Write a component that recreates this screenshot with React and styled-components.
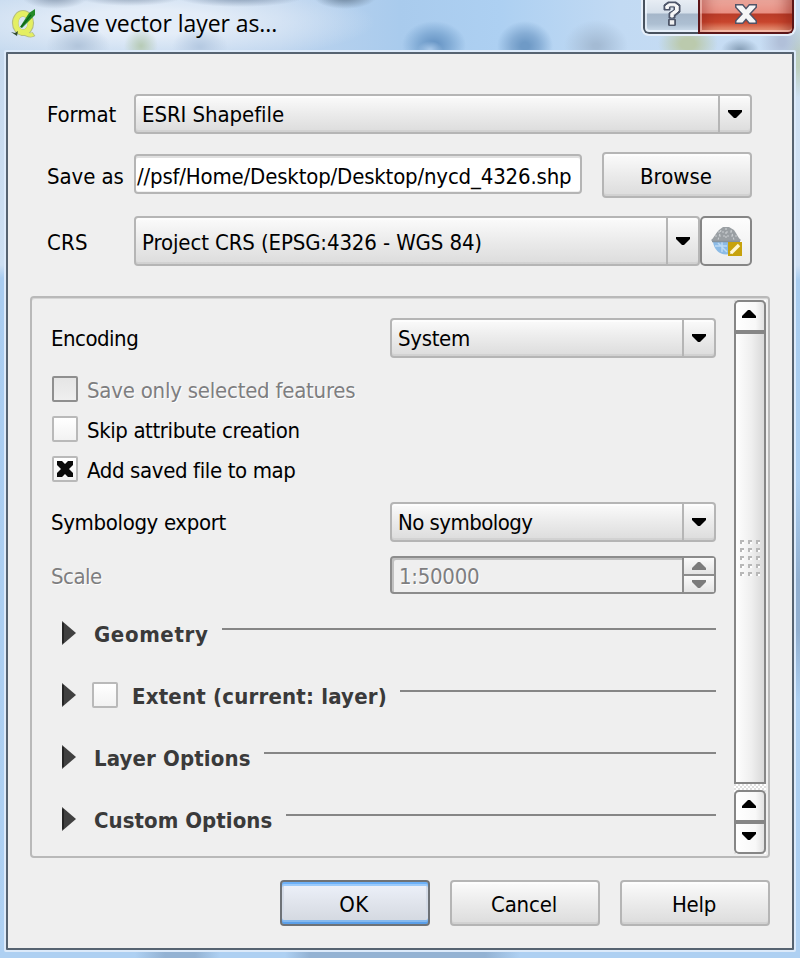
import React from 'react';
import styled, { createGlobalStyle, css } from 'styled-components';

const GlobalStyle = createGlobalStyle`
  * { box-sizing: border-box; }
  body { margin: 0; background: #b4d1f0; overflow: hidden; }
`;

const Window = styled.main`
  width: 800px;
  height: 958px;
  display: flex;
  flex-direction: column;
  padding: 0 4px;
  font-family: "DejaVu Sans Condensed", "DejaVu Sans", sans-serif;
  font-size: 22px;
  color: #000;
  background:
    radial-gradient(ellipse 34px 13px at 55px -4px, #8c9db3 10%, transparent 100%),
    radial-gradient(ellipse 56px 11px at 130px -5px, #8c9db3 10%, transparent 100%),
    radial-gradient(ellipse 66px 11px at 240px -4px, #8498b1 10%, transparent 100%),
    radial-gradient(ellipse 32px 13px at 345px -4px, #70879f 15%, transparent 100%),
    radial-gradient(ellipse 13px 9px at 430px 50px, #a5c6e8 10%, transparent 100%),
    radial-gradient(ellipse 32px 24px at 434px 45px, #6b98c7 15%, #82acd6 50%, transparent 100%),
    radial-gradient(ellipse 28px 25px at 525px 46px, #6f9ac6 15%, #86add5 50%, transparent 100%),
    radial-gradient(ellipse 32px 26px at 596px 46px, #a4bbd4 10%, transparent 100%),
    radial-gradient(ellipse 30px 22px at 688px 44px, #bbcaad 25%, transparent 100%),
    radial-gradient(ellipse 19px 12px at 740px 50px, #8ba3bb 10%, transparent 100%),
    radial-gradient(ellipse 22px 26px at 782px 42px, #b1c0d9 15%, transparent 100%),
    radial-gradient(ellipse 16px 38px at 798px 60px, #bdcfbd 20%, transparent 100%),
    radial-gradient(ellipse 17px 18px at 141px 46px, #b8ccb8 5%, transparent 100%),
    radial-gradient(ellipse 32px 20px at 78px 46px, #b3c6dc 5%, transparent 100%),
    radial-gradient(ellipse 28px 20px at 200px 47px, #b6cae2 5%, transparent 100%),
    radial-gradient(ellipse 230px 42px at 145px 22px, #e4edf8 30%, transparent 100%),
    linear-gradient(90deg, transparent 135px, #93b2d3 165px, #93b2d3 195px, transparent 220px, transparent 285px, #93b2d3 310px, #93b2d3 485px, transparent 520px) 0 950px / 800px 8px no-repeat,
    linear-gradient(180deg, transparent 480px, #91afd0 580px, #91afd0 630px, transparent 700px) 796px 0 / 4px 958px no-repeat,
    linear-gradient(180deg, #c6d9ee 0, #cddff2 213px, #a9ccf0 226px, #aed0f2 100%) 0 52px / 5px 906px no-repeat,
    linear-gradient(180deg, #cfe1f4 0, #cfe0f3 213px, #a9cdf0 228px, #aed0f2 100%) 795px 52px / 5px 906px no-repeat,
    linear-gradient(90deg, #c3d8ee 0, #bdd4ee 280px, #a9cbed 400px, #add0f2 500px, #c2daf3 620px, #c9def4 100%) 0 0 / 800px 54px no-repeat,
    #aed0f2;
`;

const TitleBar = styled.header`
  height: 50px;
  display: flex;
  align-items: flex-start;
  padding-left: 7px;
`;

const AppIcon = styled.svg`
  width: 26px;
  height: 32px;
  margin-top: 8px;
  flex: none;
`;

const Title = styled.h1`
  margin: 7px 0 0 13px;
  font: 400 23px/32px "Open Sans", "Noto Sans", sans-serif;
  letter-spacing: -0.07px;
`;

const CaptionButtons = styled.div`
  display: flex;
  margin-left: auto;
  height: 36px;
  border: solid #e6effa;
  border-width: 0 2px 2px;
  border-radius: 0 0 8px 8px;
  overflow: hidden;
`;

const CaptionButton = styled.button`
  display: flex;
  justify-content: center;
  align-items: flex-start;
  padding: 0;
  margin: 0;
  height: 34px;
  ${({ $close }) => $close ? css`
    width: 96px;
    border: solid #5c1518;
    border-width: 0 2px 2px;
    border-radius: 0 0 6px 0;
    background: linear-gradient(#eba79c 0, #e98f82 13px, #b93c28 14px, #c8452c 22px, #e99a7c 31px);
    box-shadow: inset 1px -1px 0 1px rgba(255, 215, 205, .55), inset 18px 0 14px -12px rgba(130, 25, 20, .4), inset -18px 0 14px -12px rgba(130, 25, 20, .5);
  ` : css`
    width: 55px;
    border: solid #48525f;
    border-width: 0 0 2px 2px;
    border-radius: 0 0 0 6px;
    background: linear-gradient(#e7edf4 0, #d5dfea 13px, #a5b6c9 14px, #adbfd2 24px, #cbdbea 31px);
    box-shadow: inset 1px -1px 0 1px rgba(240, 247, 255, .75);
  `}
`;

const CaptionGlyph = styled.svg`
  width: 24px;
  height: 26px;
  margin-top: 1px;
`;

const Body = styled.section`
  width: 792px;
  height: 902px;
  border: 2px solid #dceafa;
  border-radius: 2px;
`;

const Panel = styled.div`
  height: 898px;
  border: 2px solid #566371;
  border-radius: 1px;
  background: #efefef;
  padding: 40px 22px 0 22px;
`;

const TopForm = styled.div`
  display: grid;
  grid-template-columns: 87px 618px;
  grid-template-rows: 40px 46px 50px;
  row-gap: 18px;
  padding-left: 17px;
  align-items: center;
`;

const Text = styled.span`
  display: block;
  white-space: nowrap;
  line-height: 25px;
  padding-top: ${({ $down = 3 }) => $down}px;
  letter-spacing: ${({ $ls = 0 }) => $ls}px;
  color: ${({ $muted }) => ($muted ? '#7e7e80' : 'inherit')};
  text-shadow: ${({ $muted }) => ($muted ? '1px 1px 0 #fff' : 'none')};
`;

const FieldLine = styled.div`
  display: flex;
  align-items: center;
  justify-content: space-between;
`;

const raised = css`
  border: 2px solid #b5b5b5;
  border-radius: 4px;
  background: linear-gradient(#fbfbfb, #ebebeb 50%, #dcdcdc);
  box-shadow: inset 0 -2px 0 rgba(190, 190, 190, .35), inset 0 2px 0 rgba(255, 255, 255, .6);
`;

const ComboBox = styled.div`
  ${raised}
  display: flex;
  align-items: center;
  width: ${({ $width }) => $width}px;
  height: ${({ $height = 40 }) => $height}px;
  padding-left: 6px;
`;

const ComboArrow = styled.span`
  display: flex;
  align-items: center;
  justify-content: center;
  align-self: stretch;
  width: 32px;
  margin-left: auto;
  border-left: 2px solid #b5b5b5;
`;

const Arrow = styled.svg`
  display: block;
  flex: none;
  width: 14px;
  height: 8px;
  fill: ${({ $muted }) => ($muted ? '#7b7b7b' : '#000')};
  transform: ${({ $up }) => ($up ? 'scaleY(-1)' : 'none')};
`;

const LineEdit = styled.div`
  width: 448px;
  height: 40px;
  display: flex;
  align-items: center;
  margin-bottom: 2px;
  padding-left: 1px;
  border: 2px solid #b5b5b5;
  border-radius: 4px;
  background: #fff;
  box-shadow: inset 0 2px 0 #e0e0e0, inset 0 -1px 0 #f0f0f0;
  overflow: hidden;
`;

const Button = styled.button`
  ${raised}
  display: flex;
  align-items: center;
  justify-content: center;
  width: 150px;
  height: 46px;
  padding: 0 2px 0 0;
  font: inherit;
  color: inherit;
  ${({ $primary }) => $primary && css`
    border-color: #6e7277;
    background: linear-gradient(#eef2fb, #e0e4ec 50%, #d2d7df);
    box-shadow: inset 0 2px 0 #6cb0f8, inset 0 4px 0 #9ccafa, inset 0 -2px 0 #5a9fe9, inset 0 -4px 0 #86b9ee, inset 2px 0 0 #d5dce8, inset -2px 0 0 #d5dce8;
  `}
`;

const ToolButton = styled.button`
  display: flex;
  align-items: center;
  justify-content: center;
  width: 52px;
  height: 50px;
  padding: 0;
  border: 2px solid #868686;
  border-radius: 5px;
  background: linear-gradient(#fdfdfd, #ececec);
`;

const GroupFrame = styled.div`
  display: flex;
  justify-content: space-between;
  width: 740px;
  height: 562px;
  margin-top: 30px;
  padding: 2px 2px 0 19px;
  border: 2px solid #b9b9b9;
  border-radius: 4px;
  box-shadow: inset 1px 2px 0 -1px #d6d6d6;
`;

const Options = styled.div`
  width: 665px;
  padding-top: 18px;
`;

const OptionRow = styled.div`
  display: flex;
  align-items: center;
  justify-content: space-between;
  height: ${({ $height = 40 }) => $height}px;
  margin-top: ${({ $gap = 0 }) => $gap}px;
`;

const CheckList = styled.div`
  display: grid;
  row-gap: 14px;
  padding: 18px 0 20px 1px;
`;

const CheckRow = styled.label`
  display: flex;
  align-items: center;
  gap: 9px;
  height: 26px;
`;

const CheckBox = styled.span`
  display: flex;
  align-items: center;
  justify-content: center;
  flex: none;
  width: 26px;
  height: 26px;
  border: 2px solid ${({ $disabled }) => ($disabled ? '#8f8f8f' : '#b9b9b9')};
  border-radius: 2px;
  background: ${({ $disabled }) => ($disabled ? 'linear-gradient(#e5e5e5, #efefef)' : 'linear-gradient(#fff, #f2f2f2)')};
`;

const SpinBox = styled.div`
  display: flex;
  align-items: center;
  width: 326px;
  height: 38px;
  padding-left: 7px;
  border: 2px solid #8c8c8c;
  border-radius: 4px;
  box-shadow: inset 2px 2px 0 #c0c0c0;
`;

const SpinButtons = styled.div`
  display: grid;
  grid-template-rows: 18px 16px;
  width: 32px;
  margin-left: auto;
  border-left: 2px solid #8c8c8c;
`;

const SpinButton = styled.span`
  display: flex;
  align-items: center;
  justify-content: center;
  background: linear-gradient(#fafafa, #e4e4e4);
  &:first-child { border-bottom: 2px solid #8c8c8c; }
`;

const Sections = styled.div`
  padding-top: 8px;
`;

const SectionRow = styled.div`
  display: flex;
  align-items: center;
  height: 62px;
  padding-left: 11px;
  font-weight: 700;
  color: #3a3a3a;
`;

const Disclosure = styled.svg`
  width: 14px;
  height: 24px;
  flex: none;
  margin-right: ${({ $gap }) => $gap}px;
`;

const SectionCheck = styled(CheckBox)`
  margin-right: 14px;
`;

const Rule = styled.span`
  flex: none;
  width: ${({ $width }) => $width}px;
  height: 2px;
  margin: 0 0 8px auto;
  background: #868686;
`;

const ScrollBar = styled.div`
  display: flex;
  flex-direction: column;
  width: 32px;
  height: 554px;
  background: repeating-conic-gradient(#fff 0 25%, #e0e0e0 0 50%) 0 0 / 4px 4px;
`;

const ScrollButton = styled.span`
  display: flex;
  justify-content: center;
  height: 32px;
  padding-top: 8px;
  padding-right: 2px;
  border: 2px solid #868686;
  border-radius: ${({ $end }) => ($end ? '0 0 5px 5px' : '5px 5px 0 0')};
  background: linear-gradient(90deg, #fff, #f8f8f8 70%, #e2e2e2);
`;

const ScrollThumb = styled.div`
  display: flex;
  align-items: center;
  justify-content: center;
  height: 452px;
  margin-bottom: 6px;
  border: 2px solid #868686;
  background: linear-gradient(90deg, #fefefe, #efefef 55%, #d9d9d9);
`;

const Grip = styled.svg`
  width: 20px;
  height: 36px;
`;

const Footer = styled.footer`
  display: flex;
  justify-content: flex-end;
  gap: 20px;
  width: 740px;
  padding-top: 22px;
`;

const TriangleArrow = ({ up, muted }) => (
  <Arrow $up={up} $muted={muted} viewBox="0 0 14 8">
    <path d="M0 0H14V2L8 8H6L0 2Z" />
  </Arrow>
);

const Combo = ({ width, height, ls, down = 1, children }) => (
  <ComboBox $width={width} $height={height}>
    <Text $ls={ls} $down={down}>{children}</Text>
    <ComboArrow><TriangleArrow /></ComboArrow>
  </ComboBox>
);

const Section = ({ label, ls, rule, check }) => (
  <SectionRow>
    <Disclosure $gap={check ? 16 : 18} viewBox="0 0 14 24">
      <path d="M0 0L14 12L0 24Z" fill="#404040" />
      <path d="M1 2V22" stroke="#252525" strokeWidth="2" />
    </Disclosure>
    {check && <SectionCheck />}
    <Text $ls={ls}>{label}</Text>
    <Rule $width={rule} />
  </SectionRow>
);

const GlobeEdit = () => (
  <svg width="32" height="32" viewBox="0 0 32 32">
    <path d="M1 15C4 13 5 9 9 5L13 2H19L24 5C27 9 28 13 31 15L29 17H3Z" fill="#9a9fa3" />
    <path d="M3 17H29C28 24 23 29.500 16 29.500C9 29.500 4 24 3 17Z" fill="#8cbbe6" />
    <g fill="none" stroke="#d3d7da" strokeWidth="1.2" opacity=".8" strokeDasharray="2 2">
      <path d="M8 7H24M5 11H27M16 3V15M11 5L8 15M21 5L24 15" />
    </g>
    <path d="M8 18L17 27M5 21H17M12 17V27" stroke="#bcdaf5" strokeWidth="1.5" fill="none" />
    <path d="M2 16.5H30" stroke="#85929c" strokeWidth="1.5" />
    <rect x="18" y="17" width="14" height="14" fill="#c7a20d" />
    <path d="M21 28L29 20" stroke="#fff6cf" strokeWidth="3.4" />
    <path d="M20 29L22.5 28L21 26.5Z" fill="#fff" />
  </svg>
);

export default function App() {
  return (
    <>
      <GlobalStyle />
      <Window>
        <TitleBar>
          <AppIcon viewBox="0 0 26 32">
            <ellipse cx="12" cy="15" rx="7.8" ry="9.6" fill="none" stroke="#b4bd83" strokeWidth="6.6" />
            <path d="M9 26C14 22 17 30 23 26" fill="none" stroke="#b4bd83" strokeWidth="5" />
            <ellipse cx="12" cy="15" rx="7.4" ry="9.4" fill="none" stroke="#e4ef62" strokeWidth="5.2" />
            <path d="M9 25C14 22 17 30 22 26" fill="none" stroke="#e4ef62" strokeWidth="3.6" />
            <path d="M9 19L18 5L24 1V7L11 20Z" fill="#238a28" />
            <path d="M10 19L20 7" stroke="#0f6118" strokeWidth="1.2" />
            <path d="M0 24L4 25L7 23L6 28L3 26Z" fill="#304a31" />
          </AppIcon>
          <Title>Save vector layer as...</Title>
          <CaptionButtons>
            <CaptionButton aria-label="Help">
              <CaptionGlyph viewBox="0 0 24 26">
                <path d="M4 9V4L8 1H16L20 4V11L15 15V17H9V12L14 9V6H10V9Z" fill="#4d5568" stroke="#4d5568" strokeWidth="1" strokeLinejoin="round" />
                <rect x="8" y="17.500" width="8" height="7.500" rx="1.500" fill="#4d5568" />
                <path d="M5.800 7.500V5L9 2.800H15L18.200 5V10L13.200 14V16H10.800V12.500L15.500 9V5.500L14 4.800H10L8.500 5.800V7.500Z" fill="#f8f8f8" stroke="#f8f8f8" strokeWidth="1" />
                <rect x="9.800" y="19.200" width="4.400" height="4.400" fill="#f0f0f0" />
              </CaptionGlyph>
            </CaptionButton>
            <CaptionButton $close aria-label="Close">
              <CaptionGlyph viewBox="0 0 24 26">
                <path d="M1 3H9L12 6.500L15 3H23V6.500L17 13L23 19.500V23H15L12 19.500L9 23H1V19.500L7 13L1 6.500Z" fill="#505366" />
                <path d="M2.500 4.500H8.400L12 8.800L15.600 4.500H21.500L21.500 6L15 13L21.500 20V21.500H15.600L12 17.200L8.400 21.500H2.500V20L9 13L2.500 6Z" fill="#f6f6f6" />
              </CaptionGlyph>
            </CaptionButton>
          </CaptionButtons>
        </TitleBar>
        <Body>
          <Panel>
            <TopForm>
              <Text $ls={-0.07} $down={1}>Format</Text>
              <Combo width={618} ls={-0.07}>ESRI Shapefile</Combo>
              <Text $ls={-0.08}>Save as</Text>
              <FieldLine>
                <LineEdit><Text $ls={-0.17} $down={5}>//psf/Home/Desktop/Desktop/nycd_4326.shp</Text></LineEdit>
                <Button><Text>Browse</Text></Button>
              </FieldLine>
              <Text $ls={0.2}>CRS</Text>
              <FieldLine>
                <Combo width={566} height={50} ls={-0.12} down={3}>Project CRS (EPSG:4326 - WGS 84)</Combo>
                <ToolButton aria-label="Select CRS"><GlobeEdit /></ToolButton>
              </FieldLine>
            </TopForm>
            <GroupFrame>
              <Options>
                <OptionRow>
                  <Text $ls={-0.5} $down={1}>Encoding</Text>
                  <Combo width={326} ls={-0.31}>System</Combo>
                </OptionRow>
                <CheckList>
                  <CheckRow>
                    <CheckBox $disabled />
                    <Text $muted $ls={-0.23}>Save only selected features</Text>
                  </CheckRow>
                  <CheckRow>
                    <CheckBox />
                    <Text $ls={-0.4}>Skip attribute creation</Text>
                  </CheckRow>
                  <CheckRow>
                    <CheckBox>
                      <svg width="18" height="18" viewBox="0 0 18 18">
                        <path d="M1 1H6L9 4L12 1H17V5L13 9L17 13V17H12L9 14L6 17H1V13L5 9L1 5Z" fill="#0a0a0a" />
                      </svg>
                    </CheckBox>
                    <Text $ls={-0.37}>Add saved file to map</Text>
                  </CheckRow>
                </CheckList>
                <OptionRow>
                  <Text $ls={-0.35} $down={1}>Symbology export</Text>
                  <Combo width={326} ls={-0.55}>No symbology</Combo>
                </OptionRow>
                <OptionRow $height={38} $gap={14}>
                  <Text $muted $ls={-0.52}>Scale</Text>
                  <SpinBox>
                    <Text $muted $ls={-0.27}>1:50000</Text>
                    <SpinButtons>
                      <SpinButton><TriangleArrow up muted /></SpinButton>
                      <SpinButton><TriangleArrow muted /></SpinButton>
                    </SpinButtons>
                  </SpinBox>
                </OptionRow>
                <Sections>
                  <Section label="Geometry" ls={0.62} rule={494} />
                  <Section label="Extent (current: layer)" ls={0.2} rule={316} check />
                  <Section label="Layer Options" ls={0.12} rule={452} />
                  <Section label="Custom Options" ls={0.04} rule={430} />
                </Sections>
              </Options>
              <ScrollBar>
                <ScrollButton><TriangleArrow up /></ScrollButton>
                <ScrollThumb>
                  <Grip viewBox="0 0 20 36" shapeRendering="crispEdges">
                    {[0, 8, 16, 24, 32].map((y) => [0, 8, 16].map((x) => (
                      <g key={`${x}-${y}`}>
                        <rect x={x} y={y} width="4" height="4" fill="#b8b8b8" />
                        <rect x={x + 2} y={y + 2} width="2" height="2" fill="#fff" />
                      </g>
                    )))}
                  </Grip>
                </ScrollThumb>
                <ScrollButton><TriangleArrow up /></ScrollButton>
                <ScrollButton $end><TriangleArrow /></ScrollButton>
              </ScrollBar>
            </GroupFrame>
            <Footer>
              <Button $primary><Text $ls={0.4}>OK</Text></Button>
              <Button><Text $ls={-0.2}>Cancel</Text></Button>
              <Button><Text $ls={-0.25}>Help</Text></Button>
            </Footer>
          </Panel>
        </Body>
      </Window>
    </>
  );
}
